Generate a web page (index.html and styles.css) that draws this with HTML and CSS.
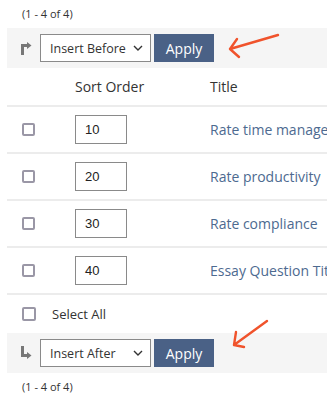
FILE: index.html
```html
<!DOCTYPE html>
<html>
<head>
<meta charset="utf-8">
<link rel="stylesheet" href="styles.css">
</head>
<body>
<div class="page">
  <div class="count">(1 - 4 of 4)</div>
  <div class="toolbar">
    <svg class="turn" width="12" height="14" viewBox="0 0 12 14"><path d="M2.5 14 V4.5 H7" fill="none" stroke="#777" stroke-width="3"/><path d="M7 1 L11.5 4.5 L7 8 Z" fill="#777"/></svg>
    <div class="select"><span>Insert Before</span><svg width="10" height="6" viewBox="0 0 10 6"><path d="M1 1 L5 5 L9 1" fill="none" stroke="#333" stroke-width="1.4"/></svg></div>
    <button class="apply">Apply</button>
  </div>
  <div class="table">
    <div class="row head">
      <div class="c-check"></div>
      <div class="c-order">Sort Order</div>
      <div class="c-title">Title</div>
    </div>
    <div class="row">
      <div class="c-check"><span class="box"></span></div>
      <div class="c-order"><span class="num">10</span></div>
      <div class="c-title"><a>Rate time management</a></div>
    </div>
    <div class="row">
      <div class="c-check"><span class="box"></span></div>
      <div class="c-order"><span class="num">20</span></div>
      <div class="c-title"><a>Rate productivity</a></div>
    </div>
    <div class="row">
      <div class="c-check"><span class="box"></span></div>
      <div class="c-order"><span class="num">30</span></div>
      <div class="c-title"><a>Rate compliance</a></div>
    </div>
    <div class="row">
      <div class="c-check"><span class="box"></span></div>
      <div class="c-order"><span class="num">40</span></div>
      <div class="c-title"><a>Essay Question Title</a></div>
    </div>
  </div>
  <div class="selectall"><span class="box"></span><span>Select All</span></div>
  <div class="toolbar">
    <svg class="turn" width="12" height="14" viewBox="0 0 12 14"><path d="M2.5 0 V9.5 H7" fill="none" stroke="#777" stroke-width="3"/><path d="M7 6 L11.5 9.5 L7 13 Z" fill="#777"/></svg>
    <div class="select"><span>Insert After</span><svg width="10" height="6" viewBox="0 0 10 6"><path d="M1 1 L5 5 L9 1" fill="none" stroke="#333" stroke-width="1.4"/></svg></div>
    <button class="apply">Apply</button>
  </div>
  <div class="count bottom">(1 - 4 of 4)</div>
  <svg class="annot top" width="60" height="30" viewBox="0 0 60 30"><path d="M51 2 L3 16 M3 16 L10 6 M3 16 L12 24" fill="none" stroke="#f0532c" stroke-width="2.4" stroke-linecap="round" stroke-linejoin="round"/></svg>
  <svg class="annot bot" width="50" height="36" viewBox="0 0 50 36"><path d="M38 3 L5 27 M5 27 L7 14 M5 27 L15 29" fill="none" stroke="#f0532c" stroke-width="2.4" stroke-linecap="round" stroke-linejoin="round"/></svg>
</div>
</body>
</html>
```
FILE: styles.css
```css
html, body {
  margin: 0;
  padding: 0;
  overflow: hidden;
  background: #fff;
}
body {
  font-family: "Open Sans", "Noto Sans", sans-serif;
  color: #333;
}
.page {
  position: relative;
  width: 400px;
  margin-left: 7px;
}
.count {
  font-size: 11px;
  height: 28px;
  line-height: 28px;
  padding-left: 15px;
  color: #333;
}
.count.bottom {
  height: 28px;
  line-height: 28px;
}
.toolbar {
  background: #f5f5f5;
  height: 40px;
  display: flex;
  align-items: center;
  padding-left: 13px;
}
.turn {
  margin-right: 8px;
}
.select {
  box-sizing: border-box;
  width: 111px;
  height: 28px;
  border: 1px solid #8a8a8a;
  background: #fff;
  display: flex;
  align-items: center;
  justify-content: space-between;
  padding: 0 7px 0 9px;
  font-size: 12.5px;
  color: #333;
}
.apply {
  margin-left: 3px;
  width: 60px;
  height: 28px;
  border: none;
  background: #4a6186;
  color: #fff;
  font-family: inherit;
  font-size: 14px;
  padding: 0;
}
.row {
  display: flex;
  align-items: center;
  height: 45px;
  border-bottom: 2px solid #ececec;
}
.row.head {
  height: 37px;
  font-size: 14px;
  color: #333;
}
.c-check {
  width: 68px;
  padding-left: 15px;
  box-sizing: border-box;
  display: flex;
  align-items: center;
}
.c-order {
  width: 135px;
}
.c-title {
  white-space: nowrap;
  font-size: 14px;
}
.c-title a {
  color: #4d6a90;
}
.box {
  display: inline-block;
  box-sizing: border-box;
  width: 13px;
  height: 13px;
  border: 2px solid #9a97a6;
  border-radius: 2px;
  background: #fff;
}
.num {
  display: inline-flex;
  align-items: center;
  box-sizing: border-box;
  width: 52px;
  height: 29px;
  border: 1px solid #8a8a8a;
  padding-left: 9px;
  font-size: 13px;
  color: #222;
  font-family: "Liberation Sans", Arial, sans-serif;
}
.selectall {
  height: 38px;
  display: flex;
  align-items: center;
  padding-left: 15px;
  font-size: 13px;
  gap: 16px;
}
.selectall .box {
  width: 14px;
  height: 14px;
}
.annot {
  position: absolute;
}
.annot.top {
  left: 220px;
  top: 33px;
}
.annot.bot {
  left: 222px;
  top: 318px;
}
```
